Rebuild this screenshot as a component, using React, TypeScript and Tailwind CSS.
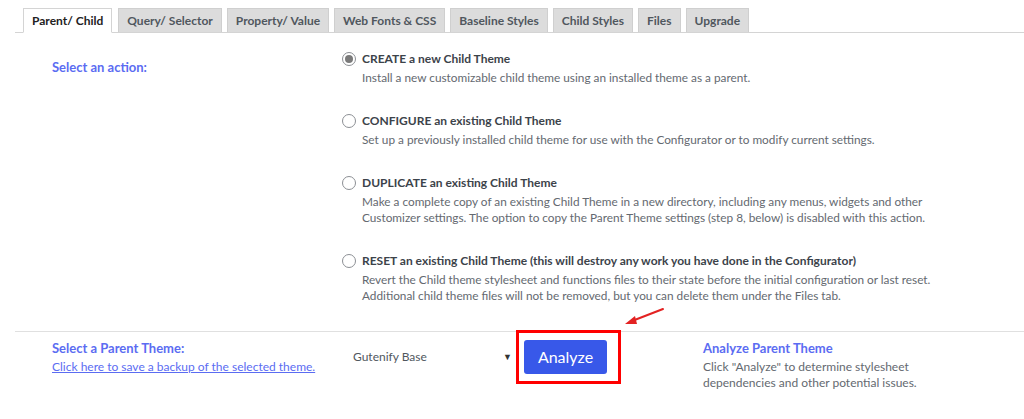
import React from "react";

const tabs = ["Parent/ Child", "Query/ Selector", "Property/ Value", "Web Fonts & CSS", "Baseline Styles", "Child Styles", "Files", "Upgrade"];

const actions = [
  {
    title: "CREATE a new Child Theme",
    desc: ["Install a new customizable child theme using an installed theme as a parent."],
    checked: true,
  },
  {
    title: "CONFIGURE an existing Child Theme",
    desc: ["Set up a previously installed child theme for use with the Configurator or to modify current settings."],
  },
  {
    title: "DUPLICATE an existing Child Theme",
    desc: [
      "Make a complete copy of an existing Child Theme in a new directory, including any menus, widgets and other",
      "Customizer settings. The option to copy the Parent Theme settings (step 8, below) is disabled with this action.",
    ],
  },
  {
    title: "RESET an existing Child Theme (this will destroy any work you have done in the Configurator)",
    desc: [
      "Revert the Child theme stylesheet and functions files to their state before the initial configuration or last reset.",
      "Additional child theme files will not be removed, but you can delete them under the Files tab.",
    ],
  },
];

function Radio({ checked }: { checked?: boolean }) {
  return (
    <span className="mt-[2px] flex h-[14px] w-[14px] shrink-0 items-center justify-center rounded-full border border-[#8c8f94] bg-white">
      {checked ? <span className="h-[8px] w-[8px] rounded-full bg-[#7a7a7a]" /> : null}
    </span>
  );
}

export default function App() {
  return (
    <div className="relative h-[419px] w-[1024px] overflow-hidden bg-white font-['Lato',sans-serif] text-[13px] text-[#3c434a]">
      <div className="ml-[15px] flex border-b border-[#d4d4d4] pl-[8px] pt-[8px]">
        {tabs.map((tab, i) => (
          <div
            key={tab}
            className={
              i === 0
                ? "-mb-px mr-[6px] flex h-[25px] items-center border border-b-white border-[#d4d4d4] bg-white px-[8px] text-[12px] font-bold text-[#222]"
                : "mr-[5px] flex h-[24px] items-center border border-b-0 border-[#cfcfcf] bg-[#dcdcdc] px-[8px] text-[12px] font-bold text-[#50575e]"
            }
          >
            {tab}
          </div>
        ))}
      </div>

      <div className="flex pt-[17px]">
        <div className="w-[342px] pl-[52px] pt-[8px] text-[13px] font-bold text-[#5b6cf2]">Select an action:</div>
        <div className="flex flex-col gap-[26px]">
          {actions.map((a) => (
            <div key={a.title} className="flex gap-[6px]">
              <Radio checked={a.checked} />
              <div>
                <div className="text-[12px] font-bold leading-[18px] text-[#3c434a]">{a.title}</div>
                <div className="mt-[2px] text-[11.8px] leading-[16px] text-[#646970]">
                  {a.desc.map((d) => (
                    <div key={d}>{d}</div>
                  ))}
                </div>
              </div>
            </div>
          ))}
        </div>
      </div>

      <div className="ml-[15px] mt-[27px] border-t border-[#e0e0e0]" />

      <div className="flex">
        <div className="w-[300px] whitespace-nowrap pl-[52px] pt-[7px]">
          <div className="text-[13px] font-bold leading-[18px] text-[#5b6cf2]">Select a Parent Theme:</div>
          <div className="mt-[2px] text-[12px] leading-[16px] text-[#5b6cf2] underline">Click here to save a backup of the selected theme.</div>
        </div>
        <div className="flex w-[216px] items-start pl-[53px] pt-[16px]">
          <span className="text-[12px] text-[#50575e]">Gutenify Base</span>
          <span className="ml-auto mr-[4px] mt-[2px] text-[9px] text-[#333]">▼</span>
        </div>
        <div className="-mt-[2px] flex h-[54px] w-[105px] items-center border-[3px] border-[#f00] pl-[5px]">
          <button className="h-[34px] w-[83px] rounded-[3px] bg-[#3858e9] text-[16px] text-white">Analyze</button>
        </div>
        <div className="pl-[82px] pt-[7px]">
          <div className="text-[13px] font-bold leading-[18px] text-[#5b6cf2]">Analyze Parent Theme</div>
          <div className="mt-[2px] text-[12px] leading-[16px] text-[#646970]">
            <div>Click "Analyze" to determine stylesheet</div>
            <div>dependencies and other potential issues.</div>
          </div>
        </div>
      </div>

      <svg className="absolute left-[620px] top-[304px]" width="50" height="25" viewBox="0 0 50 25">
        <line x1="43" y1="5" x2="12" y2="17" stroke="#e32222" strokeWidth="2" strokeLinecap="round" />
        <polygon points="5,20 15,12 17,20" fill="#e32222" />
      </svg>
    </div>
  );
}
